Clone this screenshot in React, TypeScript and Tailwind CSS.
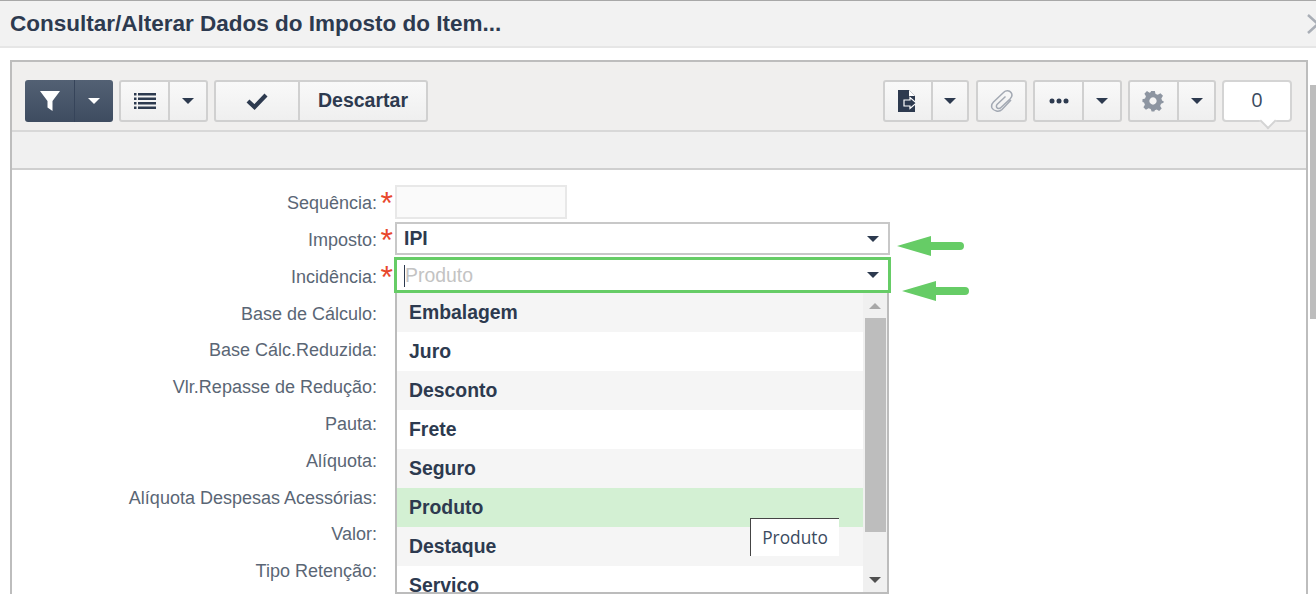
import React from 'react'

const labels = [
  { text: 'Sequência:', required: true },
  { text: 'Imposto:', required: true },
  { text: 'Incidência:', required: true },
  { text: 'Base de Cálculo:' },
  { text: 'Base Cálc.Reduzida:' },
  { text: 'Vlr.Repasse de Redução:' },
  { text: 'Pauta:' },
  { text: 'Alíquota:' },
  { text: 'Alíquota Despesas Acessórias:' },
  { text: 'Valor:' },
  { text: 'Tipo Retenção:' },
]

const options = ['Embalagem', 'Juro', 'Desconto', 'Frete', 'Seguro', 'Produto', 'Destaque', 'Serviço']

const Caret = ({ className = 'border-t-[#2d3a4f]' }: { className?: string }) => (
  <span className={`block w-0 h-0 border-x-[6px] border-x-transparent border-t-[6px] ${className}`} />
)

const ToolButton = ({ width, children, last }: { width: string; children: React.ReactNode; last?: boolean }) => (
  <div className={`${width} h-full flex items-center justify-center ${last ? '' : 'border-r-2 border-[#d0d0d0]'}`}>{children}</div>
)

const ToolGroup = ({ children }: { children: React.ReactNode }) => (
  <div className='h-[42px] flex rounded-[3px] border-2 border-[#d0d0d0] bg-gradient-to-b from-[#f9f9f9] to-[#efefef]'>{children}</div>
)

const GreenArrow = ({ className }: { className: string }) => (
  <svg className={`absolute ${className}`} width='72' height='24' viewBox='0 0 72 24'>
    <path d='M1 12 L35 2 L35 8 L64 8 Q68 8 68 12 Q68 16 64 16 L35 16 L35 22 Z' fill='#66cc66' />
  </svg>
)

const App = () => {
  return (
    <div className='relative w-[1316px] h-[594px] overflow-hidden bg-white text-[#2d3a4f] font-["Liberation_Sans",Arial,sans-serif]'>
      <header className='h-[48px] flex items-center justify-between bg-[#f2f2f2] border-t border-t-[#a8a8a8] border-b-2 border-b-[#e6e6e6] pl-[10px]'>
        <h1 className='text-[22.5px] font-bold leading-none pt-[1px]'>Consultar/Alterar Dados do Imposto do Item...</h1>
        <svg className='-mr-[4px]' width='14' height='22' viewBox='0 0 14 22'>
          <path d='M2 2 L12 11 L2 20' fill='none' stroke='#a9aeb6' strokeWidth='2.500' />
        </svg>
      </header>

      <div className='flex mt-[12px] ml-[10px] h-[534px]'>
        <main className='w-[1298px] border-2 border-b-0 border-[#bdbdbd]'>
          <div className='h-[70px] bg-[#f0efee] border-b-2 border-[#d8d8d8] flex items-start justify-between pt-[18px] pl-[13px] pr-[14px]'>
            <div className='flex gap-[6px]'>
              <div className='h-[42px] w-[88px] flex rounded-[3px] bg-gradient-to-b from-[#536174] to-[#3e4c60]'>
                <div className='w-[50px] h-full flex items-center justify-center border-r border-[#36445a]'>
                  <svg width='22' height='22' viewBox='0 0 22 22'>
                    <path d='M1 1 H21 L13.5 11 V21 L8.5 17.5 V11 Z' fill='#fff' />
                  </svg>
                </div>
                <div className='flex-1 flex items-center justify-center'>
                  <Caret className='border-t-white' />
                </div>
              </div>
              <ToolGroup>
                <ToolButton width='w-[49px]'>
                  <svg width='22' height='18' viewBox='0 0 22 18' fill='#2d3a4f'>
                    <rect x='0' y='1' width='2.5' height='2.5' />
                    <rect x='4' y='1' width='18' height='2.5' />
                    <rect x='0' y='5.5' width='2.5' height='2.5' />
                    <rect x='4' y='5.5' width='18' height='2.5' />
                    <rect x='0' y='10' width='2.5' height='2.5' />
                    <rect x='4' y='10' width='18' height='2.5' />
                    <rect x='0' y='14.5' width='2.5' height='2.5' />
                    <rect x='4' y='14.5' width='18' height='2.5' />
                  </svg>
                </ToolButton>
                <ToolButton width='w-[36px]' last>
                  <Caret />
                </ToolButton>
              </ToolGroup>
              <ToolGroup>
                <ToolButton width='w-[84px]'>
                  <svg width='22' height='18' viewBox='0 0 22 18'>
                    <path d='M2 9 L8.5 15 L20 3' fill='none' stroke='#2d3a4f' strokeWidth='4.2' />
                  </svg>
                </ToolButton>
                <ToolButton width='w-[126px]' last>
                  <span className='text-[19.5px] font-bold'>Descartar</span>
                </ToolButton>
              </ToolGroup>
            </div>

            <div className='flex gap-[6px]'>
              <div className='mr-px'>
                <ToolGroup>
                  <ToolButton width='w-[48px]'>
                    <svg className='-ml-[2px]' width='20' height='24' viewBox='0 0 20 24'>
                      <path d='M1 1 H12 L18 7 V23 H1 Z' fill='#2d3a4f' />
                      <path d='M12 1 V7 H18' fill='#fff' />
                      <path d='M7 11 H13 V8.5 L19.5 14 L13 19.5 V17 H7 Z' fill='#2d3a4f' stroke='#fff' strokeWidth='1.2' />
                    </svg>
                  </ToolButton>
                  <ToolButton width='w-[34px]' last>
                    <Caret />
                  </ToolButton>
                </ToolGroup>
              </div>
              <ToolGroup>
                <ToolButton width='w-[47px]' last>
                  <svg width='24' height='24' viewBox='0 0 24 24' fill='none' stroke='#a3a9b3' strokeWidth='1.5'>
                    <path d='M21 11 L12 20.5 C9 23.5 3.5 22 2 19 C1 16.5 2 14.500 3.500 13 L13.500 3.500 C16 1 19.500 1.500 21 3.500 C22.500 5.500 22 8 20 10 L11 18.500 C9.500 20 7.500 19.500 6.800 18.500 C6 17.200 6.500 16 7.500 15 L15.500 7.500' />
                  </svg>
                </ToolButton>
              </ToolGroup>
              <ToolGroup>
                <ToolButton width='w-[49px]'>
                  <svg width='20' height='6' viewBox='0 0 20 6' fill='#2d3a4f'>
                    <circle cx='3' cy='3' r='2.500' />
                    <circle cx='10' cy='3' r='2.500' />
                    <circle cx='17' cy='3' r='2.500' />
                  </svg>
                </ToolButton>
                <ToolButton width='w-[36px]' last>
                  <Caret />
                </ToolButton>
              </ToolGroup>
              <ToolGroup>
                <ToolButton width='w-[49px]'>
                  <svg className='-ml-[2px]' width='22' height='22' viewBox='0 0 24 24' fill='#8d95a1'>
                    <path fillRule='evenodd' d='M10 1 H14 L14.800 4.300 L17.200 5.300 L20.100 3.500 L22.900 6.300 L21.100 9.200 L22 11.600 L23.500 12 V14 L20.800 15 L19.800 17.400 L21.500 20.200 L18.700 23 L16 21.300 L14 22 L13.500 23.500 H10.500 L9.500 20.800 L7.100 19.800 L4.300 21.500 L1.500 18.700 L3.200 16 L2.200 13.600 L0.500 13 V10 L3.300 9.200 L4.300 6.800 L2.600 4 L5.400 1.200 L8.200 2.900 L9.300 2.500 Z M12 8 A4 4 0 1 0 12.010 8 Z' />
                  </svg>
                </ToolButton>
                <ToolButton width='w-[35px]' last>
                  <Caret />
                </ToolButton>
              </ToolGroup>
              <div className='relative h-[42px] w-[70px] rounded-[4px] border-2 border-[#d4d4d4] bg-white flex items-center justify-center pb-[3px] text-[20px] font-["Open_Sans",sans-serif] text-[#3a4a60]'>
                0
                <span className='absolute -bottom-[7px] right-[16px] w-[12px] h-[12px] rotate-45 bg-white border-r-2 border-b-2 border-[#d4d4d4]' />
              </div>
            </div>
          </div>

          <div className='h-[38px] bg-[#f0f0f0] border-b-2 border-[#cfcfcf]' />

          <div className='pt-[15.4px] w-[365px] flex flex-col'>
            {labels.map(({ text, required }) => (
              <div key={text} className='h-[36.8px] flex items-center justify-end text-[18px] text-[#5a6675]'>
                <span className='relative'>
                  {text}
                  {required && (
                    <span className='absolute -right-[16px] -top-[3px] text-[32px] leading-[32px] text-[#e8472c]'>*</span>
                  )}
                </span>
              </div>
            ))}
          </div>
        </main>
        <aside className='ml-[2px] w-[6px] h-[234px] mt-[25px] bg-[#bdbdbd]' />
      </div>

      <div className='absolute left-[395px] top-[185px] w-[495px]'>
        <div className='w-[172px] h-[34px] bg-[#fafafa] border-2 border-[#e8e8e8]' />
        <div className='mt-[3px] h-[33px] flex items-center justify-between bg-white border-2 border-[#c8c8c8] pl-[7px] pr-[9px]'>
          <span className='text-[19.4px] font-bold'>IPI</span>
          <Caret />
        </div>
        <div className='mt-[2px] -mx-px h-[36px] flex items-center justify-between bg-white border-[3px] border-[#66cc66] pl-[7px] pr-[9px]'>
          <span className='flex items-center pt-px text-[19.4px] text-[#c3c3c3]'>
            <span className='w-px h-[22px] bg-[#2d3a4f]' />
            Produto
          </span>
          <Caret />
        </div>
        <div className='relative flex h-[301px] w-[494px] border-x-2 border-b-2 border-x-[#bcbcbc] border-b-[#bcbcbc] bg-white overflow-hidden'>
          <ul className='flex-1'>
            {options.map((option, index) => (
              <li
                key={option}
                className={`h-[39px] flex items-center pl-[12px] text-[19.4px] font-bold ${
                  option === 'Produto' ? 'bg-[#d3f0d3]' : index % 2 === 0 ? 'bg-[#f5f5f5]' : 'bg-white'
                }`}
              >
                {option}
              </li>
            ))}
          </ul>
          <div className='w-[24px] bg-[#f0f0f0] flex flex-col items-center pt-[10px]'>
            <span className='block w-0 h-0 border-x-[6px] border-x-transparent border-b-[6px] border-b-[#a8a8a8]' />
            <div className='w-[21px] h-[214px] mt-[9px] bg-[#bdbdbd]' />
            <div className='mt-auto mb-[9px]'>
              <Caret className='border-t-[#505050]' />
            </div>
          </div>
          <div className='absolute left-[353px] top-[225px] w-[89px] h-[38px] bg-white border-l border-t border-[#444] flex items-center justify-center text-[17.3px] text-[#3a4a60] font-["Open_Sans",sans-serif]'>
            Produto
          </div>
        </div>
      </div>

      <GreenArrow className='left-[896px] top-[234px]' />
      <GreenArrow className='left-[901px] top-[279px]' />
    </div>
  )
}

export default App
